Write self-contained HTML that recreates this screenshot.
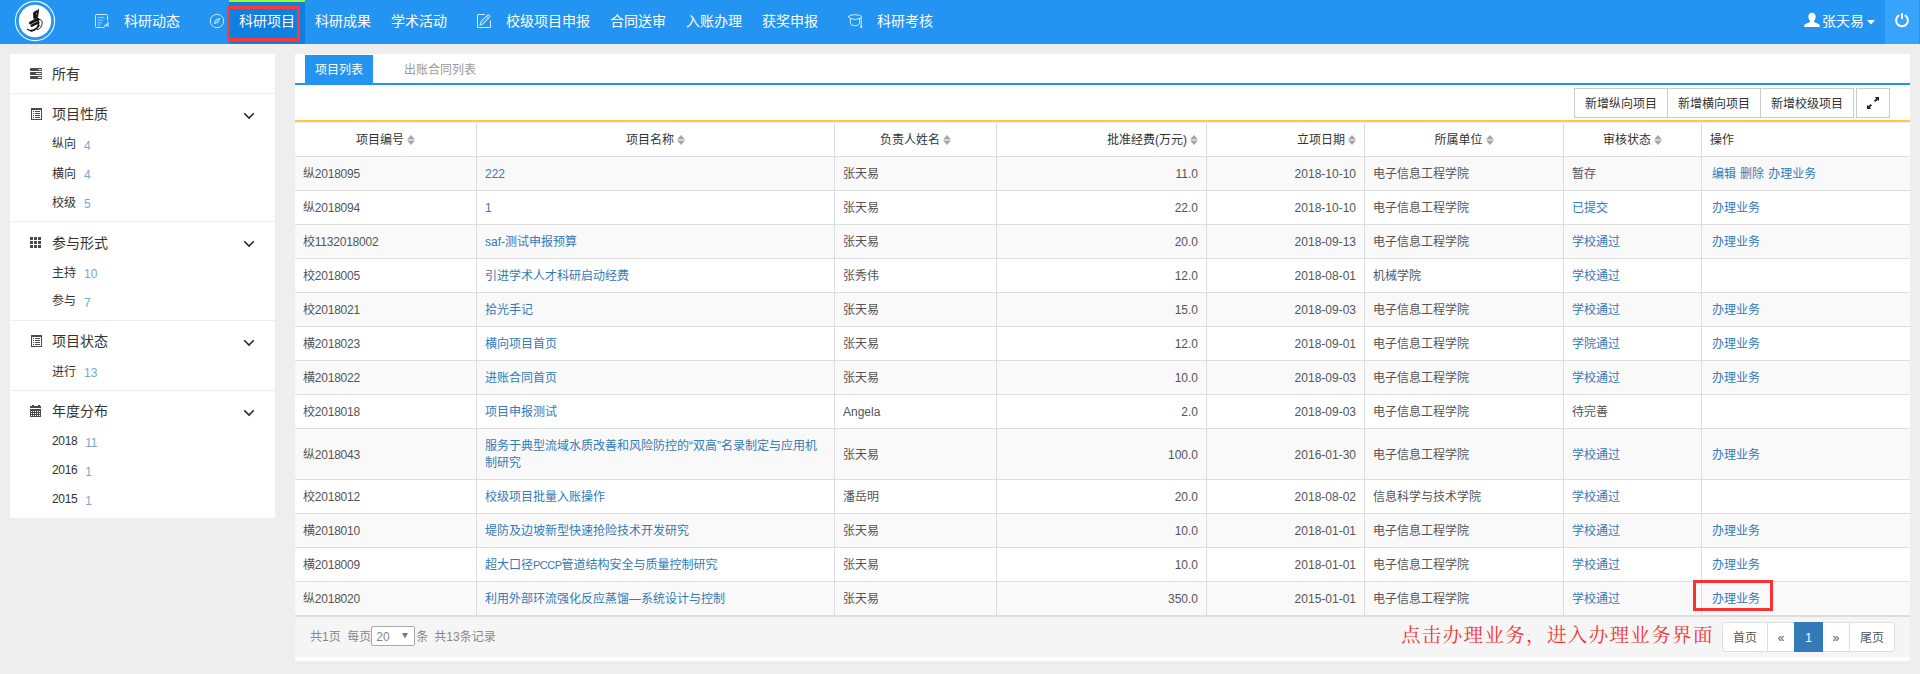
<!DOCTYPE html>
<html lang="zh-CN">
<head>
<meta charset="utf-8">
<title>科研项目</title>
<style>
*{box-sizing:border-box;margin:0;padding:0}
html,body{width:1920px;height:674px;overflow:hidden}
body{background:#eeeeee;font-family:"Liberation Sans","Noto Sans CJK SC",sans-serif;font-size:12px;color:#555;position:relative}
a{color:#337ab7;text-decoration:none}
/* ---------- header ---------- */
#hd{position:absolute;left:0;top:0;width:1920px;height:44px;background:#2494f2}
#hd .nv{position:absolute;top:0;height:44px;line-height:42px;font-size:14px;color:#fff;white-space:nowrap}
#hd .act{position:absolute;left:229px;top:0;width:76px;height:44px;background:#0e80e2;border-top:2px solid #9efb2a}
#hd .ic{position:absolute}
#redbox1{position:absolute;left:227px;top:6px;width:73px;height:35px;border:3px solid #fd3a3a}
#pw{position:absolute;left:1885px;top:0;width:34px;height:44px;background:#38a3fd}
/* ---------- sidebar ---------- */
#sb{position:absolute;left:10px;top:54px;width:265px;height:464px;background:#fff}
#sb .dv{position:absolute;left:0;width:265px;height:1px;background:#eee}
#sb .h{position:absolute;left:42px;font-size:14px;line-height:20px;color:#333;white-space:nowrap}
#sb .s{position:absolute;left:42px;font-size:12px;line-height:18px;color:#333;white-space:nowrap}
#sb .s i{font-style:normal;color:#7ba7d1;margin-left:8px;position:relative;top:1px}
#sb svg{position:absolute}
/* ---------- main ---------- */
#mn{position:absolute;left:295px;top:54px;width:1615px;height:607px;background:#fff}
#tab1{position:absolute;left:10px;top:1px;width:68px;height:29px;background:#2494f2;color:#fff;font-size:12px;line-height:30px;text-align:center}
#tab2{position:absolute;left:109px;top:1px;height:29px;color:#999;font-size:12px;line-height:30px}
#bl{position:absolute;left:0;top:29px;width:1615px;height:2px;background:#2494f2}
#yl{position:absolute;left:0;top:66px;width:1615px;height:2px;background:#fdc942;box-shadow:0 1px 0 #eceef3;z-index:2}
.btn{position:absolute;top:34px;height:30px;border:1px solid #ccc;background:#fff;color:#333;font-size:12px;line-height:30px;text-align:center;white-space:nowrap}
table{position:absolute;left:0;top:68px;width:1615px;border-collapse:separate;border-spacing:0;table-layout:fixed}
th,td{padding:9px 8px 7px;line-height:17px;height:34px;border-left:1px solid #ddd;font-size:12px;font-weight:normal;text-align:left;vertical-align:middle;overflow:hidden}
th{color:#333;text-align:center;white-space:nowrap}
td{color:#555;border-top:1px solid #ddd;white-space:nowrap}
tr>*:first-child{border-left:none}
tbody tr:nth-child(odd) td{background:#f9f9f9}
.r{text-align:right}
th.r{text-align:right}
th.l{text-align:left;padding-left:8px}
td.op{padding-left:10px;word-spacing:.7px}
td:first-child{letter-spacing:-.22px}
.so{display:inline-block;width:8px;height:10px;margin-left:3px;position:relative;top:1px}
#ft{position:absolute;left:0;top:561px;width:1615px;height:42px;background:#f5f5f5;border-top:2px solid #ddd}
#ft .inf{position:absolute;left:15px;top:11px;line-height:18px;color:#888;font-size:12px;white-space:nowrap}
#sel{display:inline-block;vertical-align:middle;width:44px;height:20px;border:1px solid #a9a9a9;border-radius:2px;background:#fff;margin:0 1px 0 0;position:relative;top:-2px;line-height:20px;padding-left:4px;color:#888}
#sel svg{position:absolute;left:30px;top:6px}
#note{position:absolute;left:1106px;top:569px;font-family:"Liberation Serif","Noto Serif CJK SC",serif;font-size:19.5px;letter-spacing:1.35px;line-height:26px;color:#f23535;white-space:nowrap}
#pg{position:absolute;left:1428px;top:568px;height:30px;display:flex}
#pg span{display:block;height:30px;border:1px solid #ddd;margin-left:-1px;background:#fff;color:#555;font-size:12px;line-height:30px;text-align:center}
#pg span.on{background:#337ab7;border-color:#337ab7;color:#fff;position:relative;z-index:1}
#redbox2{position:absolute;left:1693px;top:580px;width:80px;height:31px;border:3px solid #f83232}
</style>
</head>
<body>
<div id="hd">
  <div class="act"></div>
  <!-- logo -->
  <svg class="ic" style="left:14px;top:0" width="42" height="42" viewBox="0 0 42 42">
    <circle cx="21" cy="21" r="19.6" fill="none" stroke="#fff" stroke-width="1.1" opacity=".92"/>
    <circle cx="21" cy="21" r="16.2" fill="#fff"/>
    <g fill="none" stroke="#151515" stroke-linecap="round" stroke-linejoin="round">
      <path d="M24.6 9.8 C22.6 10.8 20.6 11.6 19.5 12.6 C19.2 14.6 19.6 16.8 19.8 18.8 L23.4 18.6 C23.6 16.4 24.6 13 24.6 9.8 Z" fill="#151515" stroke-width=".7"/>
      <path d="M16.4 23 C18.6 21.6 21.4 20.2 23.8 19.3" stroke-width="2.9"/>
      <path d="M17.8 25.7 C19.8 24.6 22 23.6 24.2 22.7" stroke-width="2.5"/>
      <path d="M24.3 19.6 L24.5 26.4" stroke-width="1.6"/>
      <path d="M25.3 19.4 C28.6 19.8 28.8 22.4 27.6 25.6 C26.6 28.2 25.2 29.6 23.1 29.6" stroke-width="1"/>
      <path d="M13.4 29.3 C15.2 30.7 17.4 30.9 19.4 30.3" stroke-width="1.2"/>
      <path d="M17 30.7 C19.6 30.6 23 28.4 24.5 25.6" stroke-width="1.9"/>
    </g>
    <ellipse cx="22.4" cy="13.7" rx=".45" ry=".8" fill="#eee"/>
  </svg>
  <!-- doc icon -->
  <svg class="ic" style="left:94px;top:13px" width="16" height="16" viewBox="0 0 16 16" fill="none" stroke="#fff" opacity=".8">
    <path d="M13.5 7.5 V2.5 Q13.5 1.5 12.5 1.5 H2.5 Q1.5 1.5 1.5 2.5 V13.5 Q1.5 14.5 2.5 14.5 H10.5" stroke-width="1"/>
    <path d="M3.5 4.5 H10.5 M3.5 7 H9 M3.5 9.8 H8 M3.5 12.2 H6.5" stroke-width="1" opacity=".7"/>
    <path d="M10.6 13.6 V12 M12.3 13.6 V10.8 M14 13.6 V9" stroke-width="1.3"/>
  </svg>
  <div class="nv" style="left:124px">科研动态</div>
  <!-- compass icon -->
  <svg class="ic" style="left:209px;top:13px" width="16" height="16" viewBox="0 0 16 16" fill="none" stroke="#fff" opacity=".78">
    <circle cx="8" cy="8" r="6.7" stroke-width="1"/>
    <path d="M10.8 5.2 L9.2 9.2 L5.2 10.8 L6.8 6.8 Z" stroke-width=".9" fill="#fff" fill-opacity=".35"/>
  </svg>
  <div class="nv" style="left:239px">科研项目</div>
  <div class="nv" style="left:315px">科研成果</div>
  <div class="nv" style="left:391px">学术活动</div>
  <!-- edit icon -->
  <svg class="ic" style="left:476px;top:13px" width="16" height="16" viewBox="0 0 16 16" fill="none" stroke="#fff" opacity=".8" stroke-linejoin="round" stroke-linecap="round">
    <path d="M8.6 1.5 H1.5 V14.5 H14.5 V7.6" stroke-width="1"/>
    <path d="M11.2 2.2 Q12.2 1.2 13.3 2.2 Q14.4 3.3 13.4 4.4 L7.2 11 L3.9 12.2 L4.9 8.8 Z" stroke-width="1" fill="#fff" fill-opacity=".25"/>
    <path d="M10.3 3.2 L12.6 5.4" stroke-width=".9"/>
  </svg>
  <div class="nv" style="left:506px">校级项目申报</div>
  <div class="nv" style="left:610px">合同送审</div>
  <div class="nv" style="left:686px">入账办理</div>
  <div class="nv" style="left:762px">获奖申报</div>
  <!-- grad cap icon -->
  <svg class="ic" style="left:847px;top:13px" width="16" height="16" viewBox="0 0 16 16" fill="none" stroke="#fff" opacity=".8" stroke-linejoin="round" stroke-linecap="round">
    <path d="M1.6 3.8 Q1.4 2.8 3.4 2.3 Q7.6 1 12.6 2.3 Q14.6 2.8 14.4 3.9 Q14.3 4.7 12.8 5.2 L8 6.6 L3.2 5.2 Q1.8 4.8 1.6 3.8 Z" stroke-width="1"/>
    <path d="M3.4 5.4 V9.6 Q3.6 12.6 8 12.8 Q12.4 12.6 12.6 9.6 V5.4" stroke-width="1"/>
    <path d="M14.2 4.4 V12.6" stroke-width="1"/>
    <rect x="13.2" y="12.8" width="2" height="2" fill="#fff" stroke="none"/>
  </svg>
  <div class="nv" style="left:877px">科研考核</div>
  <!-- user -->
  <svg class="ic" style="left:1804px;top:12px" width="16" height="16" viewBox="0 0 16 16">
    <path fill="#fff" d="M8 .8 C10.3 .8 11.6 2.4 11.6 4.8 C11.6 6.6 10.9 8 10 8.8 C9.9 9.6 10.2 10 11 10.4 L14.6 12 C15.6 12.5 15.8 13.4 15.8 14.9 H.2 C.2 13.4 .4 12.5 1.4 12 L5 10.4 C5.8 10 6.1 9.6 6 8.8 C5.1 8 4.4 6.6 4.4 4.8 C4.4 2.4 5.7 .8 8 .8 Z"/>
  </svg>
  <div class="nv" style="left:1822px">张天易</div>
  <svg class="ic" style="left:1867px;top:20px" width="8" height="5" viewBox="0 0 8 5"><path d="M0 0 H8 L4 4.4 Z" fill="#fff"/></svg>
  <div id="pw">
    <svg style="position:absolute;left:9px;top:12px" width="16" height="16" viewBox="0 0 16 16" fill="none" stroke="#fff" stroke-width="2" stroke-linecap="butt">
      <path d="M5.3 3.2 A5.9 5.9 0 1 0 10.7 3.2"/>
      <path d="M8 1.2 V7"/>
    </svg>
  </div>
  <div id="redbox1"></div>
</div>
<div id="sb">
<svg style="left:20px;top:14px" width="12" height="11" viewBox="0 0 12 11"><g fill="#4a4a4a"><rect x="0" y="0" width="12" height="3" rx=".7"/><rect x="0" y="4" width="12" height="3" rx=".7"/><rect x="0" y="8" width="12" height="3" rx=".7"/></g><g fill="#fff"><rect x="8.6" y="1" width="2.6" height="1"/><rect x="6" y="5" width="5.2" height="1"/><rect x="8" y="9" width="3.2" height="1"/></g></svg>
<div class="h" style="top:10px">所有</div>
<div class="dv" style="top:39px"></div>
<svg style="left:21px;top:54px" width="11" height="12" viewBox="0 0 11 12" shape-rendering="crispEdges"><rect x=".5" y=".5" width="10" height="11" fill="none" stroke="#4a4a4a" stroke-width="1"/><rect x="0" y="0" width="11" height="2" fill="#4a4a4a"/><g fill="#4a4a4a"><rect x="2" y="3" width="1" height="1"/><rect x="4" y="3" width="5" height="1"/><rect x="2" y="5" width="1" height="1"/><rect x="4" y="5" width="5" height="1"/><rect x="2" y="7" width="1" height="1"/><rect x="4" y="7" width="5" height="1"/><rect x="2" y="9" width="1" height="1"/><rect x="4" y="9" width="5" height="1"/></g></svg>
<div class="h" style="top:50px">项目性质</div>
<svg style="left:233px;top:58px" width="12" height="8" viewBox="0 0 12 8"><path d="M1.2 1.2 L6 6 L10.8 1.2" fill="none" stroke="#2a2a2a" stroke-width="1.6"/></svg>
<div class="s" style="top:81px">纵向<i style="top:2px">4</i></div>
<div class="s" style="top:111px">横向<i>4</i></div>
<div class="s" style="top:140px">校级<i>5</i></div>
<div class="dv" style="top:167px"></div>
<svg style="left:20px;top:183px" width="11" height="11" viewBox="0 0 11 11" shape-rendering="crispEdges"><g fill="#4a4a4a"><rect x="0" y="0" width="3" height="3"/><rect x="4" y="0" width="3" height="3"/><rect x="8" y="0" width="3" height="3"/><rect x="0" y="4" width="3" height="3"/><rect x="4" y="4" width="3" height="3"/><rect x="8" y="4" width="3" height="3"/><rect x="0" y="8" width="3" height="3"/><rect x="4" y="8" width="3" height="3"/><rect x="8" y="8" width="3" height="3"/></g></svg>
<div class="h" style="top:179px">参与形式</div>
<svg style="left:233px;top:186px" width="12" height="8" viewBox="0 0 12 8"><path d="M1.2 1.2 L6 6 L10.8 1.2" fill="none" stroke="#2a2a2a" stroke-width="1.6"/></svg>
<div class="s" style="top:210px">主持<i>10</i></div>
<div class="s" style="top:238px">参与<i style="top:2px">7</i></div>
<div class="dv" style="top:266px"></div>
<svg style="left:21px;top:281px" width="11" height="12" viewBox="0 0 11 12" shape-rendering="crispEdges"><rect x=".5" y=".5" width="10" height="11" fill="none" stroke="#4a4a4a" stroke-width="1"/><rect x="0" y="0" width="11" height="2" fill="#4a4a4a"/><g fill="#4a4a4a"><rect x="2" y="3" width="1" height="1"/><rect x="4" y="3" width="5" height="1"/><rect x="2" y="5" width="1" height="1"/><rect x="4" y="5" width="5" height="1"/><rect x="2" y="7" width="1" height="1"/><rect x="4" y="7" width="5" height="1"/><rect x="2" y="9" width="1" height="1"/><rect x="4" y="9" width="5" height="1"/></g></svg>
<div class="h" style="top:277px">项目状态</div>
<svg style="left:233px;top:285px" width="12" height="8" viewBox="0 0 12 8"><path d="M1.2 1.2 L6 6 L10.8 1.2" fill="none" stroke="#2a2a2a" stroke-width="1.6"/></svg>
<div class="s" style="top:309px">进行<i>13</i></div>
<div class="dv" style="top:336px"></div>
<svg style="left:20px;top:351px" width="11" height="12" viewBox="0 0 11 12" shape-rendering="crispEdges"><g fill="#4a4a4a"><rect x="1.5" y="0" width="2" height="1"/><rect x="7.5" y="0" width="2" height="1"/><rect x="0" y="1" width="11" height="2"/><rect x="0" y="4" width="11" height="8"/></g><g fill="#fff"><rect x="1" y="6" width="1" height="1"/><rect x="3" y="6" width="1" height="1"/><rect x="5" y="6" width="1" height="1"/><rect x="7" y="6" width="1" height="1"/><rect x="9" y="6" width="1" height="1"/><rect x="1" y="8" width="1" height="1"/><rect x="3" y="8" width="1" height="1"/><rect x="5" y="8" width="1" height="1"/><rect x="7" y="8" width="1" height="1"/><rect x="9" y="8" width="1" height="1"/><rect x="1" y="10" width="1" height="1"/><rect x="3" y="10" width="1" height="1"/><rect x="5" y="10" width="1" height="1"/><rect x="7" y="10" width="1" height="1"/><rect x="9" y="10" width="1" height="1"/></g></svg>
<div class="h" style="top:347px">年度分布</div>
<svg style="left:233px;top:355px" width="12" height="8" viewBox="0 0 12 8"><path d="M1.2 1.2 L6 6 L10.8 1.2" fill="none" stroke="#2a2a2a" stroke-width="1.6"/></svg>
<div class="s" style="top:378px;letter-spacing:-.35px">2018<i style="top:2px">11</i></div>
<div class="s" style="top:407px;letter-spacing:-.35px">2016<i style="top:2px">1</i></div>
<div class="s" style="top:436px;letter-spacing:-.35px">2015<i style="top:2px">1</i></div>
</div>
<div id="mn">
<div id="tab1">项目列表</div>
<div id="tab2">出账合同列表</div>
<div id="bl"></div>
<div class="btn" style="left:1279px;width:94px">新增纵向项目</div>
<div class="btn" style="left:1372px;width:94px">新增横向项目</div>
<div class="btn" style="left:1465px;width:94px">新增校级项目</div>
<div class="btn" style="left:1561px;width:34px"><svg style="position:absolute;left:10px;top:8px" width="12" height="12" viewBox="0 0 12 12"><path d="M7.8 0 H12 V4.2 L10.6 2.8 L8.4 5 L7 3.6 L9.2 1.4 Z M4.2 12 H0 V7.8 L1.4 9.2 L3.6 7 L5 8.4 L2.8 10.6 Z" fill="#222"/></svg></div>
<div id="yl"></div>
<table><colgroup><col style="width:181px"><col style="width:358px"><col style="width:162px"><col style="width:210px"><col style="width:158px"><col style="width:199px"><col style="width:138px"><col style="width:209px"></colgroup>
<thead><tr><th>项目编号<svg class="so" viewBox="0 0 8 10"><path d="M0 4.5 L4 0 L8 4.5 Z M0 5.5 L4 10 L8 5.5 Z" fill="#a6a6a6"/></svg></th><th>项目名称<svg class="so" viewBox="0 0 8 10"><path d="M0 4.5 L4 0 L8 4.5 Z M0 5.5 L4 10 L8 5.5 Z" fill="#a6a6a6"/></svg></th><th>负责人姓名<svg class="so" viewBox="0 0 8 10"><path d="M0 4.5 L4 0 L8 4.5 Z M0 5.5 L4 10 L8 5.5 Z" fill="#a6a6a6"/></svg></th><th class="r">批准经费(万元)<svg class="so" viewBox="0 0 8 10"><path d="M0 4.5 L4 0 L8 4.5 Z M0 5.5 L4 10 L8 5.5 Z" fill="#a6a6a6"/></svg></th><th class="r">立项日期<svg class="so" viewBox="0 0 8 10"><path d="M0 4.5 L4 0 L8 4.5 Z M0 5.5 L4 10 L8 5.5 Z" fill="#a6a6a6"/></svg></th><th>所属单位<svg class="so" viewBox="0 0 8 10"><path d="M0 4.5 L4 0 L8 4.5 Z M0 5.5 L4 10 L8 5.5 Z" fill="#a6a6a6"/></svg></th><th>审核状态<svg class="so" viewBox="0 0 8 10"><path d="M0 4.5 L4 0 L8 4.5 Z M0 5.5 L4 10 L8 5.5 Z" fill="#a6a6a6"/></svg></th><th class="l">操作</th></tr></thead><tbody>
<tr><td>纵2018095</td><td><a>222</a></td><td>张天易</td><td class="r">11.0</td><td class="r">2018-10-10</td><td>电子信息工程学院</td><td>暂存</td><td class="op"><a>编辑</a> <a>删除</a> <a>办理业务</a></td></tr>
<tr><td>纵2018094</td><td><a>1</a></td><td>张天易</td><td class="r">22.0</td><td class="r">2018-10-10</td><td>电子信息工程学院</td><td><a>已提交</a></td><td class="op"><a>办理业务</a></td></tr>
<tr><td>校1132018002</td><td><a>saf-测试申报预算</a></td><td>张天易</td><td class="r">20.0</td><td class="r">2018-09-13</td><td>电子信息工程学院</td><td><a>学校通过</a></td><td class="op"><a>办理业务</a></td></tr>
<tr><td>校2018005</td><td><a>引进学术人才科研启动经费</a></td><td>张秀伟</td><td class="r">12.0</td><td class="r">2018-08-01</td><td>机械学院</td><td><a>学校通过</a></td><td class="op"></td></tr>
<tr><td>校2018021</td><td><a>拾光手记</a></td><td>张天易</td><td class="r">15.0</td><td class="r">2018-09-03</td><td>电子信息工程学院</td><td><a>学校通过</a></td><td class="op"><a>办理业务</a></td></tr>
<tr><td>横2018023</td><td><a>横向项目首页</a></td><td>张天易</td><td class="r">12.0</td><td class="r">2018-09-01</td><td>电子信息工程学院</td><td><a>学院通过</a></td><td class="op"><a>办理业务</a></td></tr>
<tr><td>横2018022</td><td><a>进账合同首页</a></td><td>张天易</td><td class="r">10.0</td><td class="r">2018-09-03</td><td>电子信息工程学院</td><td><a>学校通过</a></td><td class="op"><a>办理业务</a></td></tr>
<tr><td>校2018018</td><td><a>项目申报测试</a></td><td>Angela</td><td class="r">2.0</td><td class="r">2018-09-03</td><td>电子信息工程学院</td><td>待完善</td><td class="op"></td></tr>
<tr><td>纵2018043</td><td><a>服务于典型流域水质改善和风险防控的“双高”名录制定与应用机<br>制研究</a></td><td>张天易</td><td class="r">100.0</td><td class="r">2016-01-30</td><td>电子信息工程学院</td><td><a>学校通过</a></td><td class="op"><a>办理业务</a></td></tr>
<tr><td>校2018012</td><td><a>校级项目批量入账操作</a></td><td>潘岳明</td><td class="r">20.0</td><td class="r">2018-08-02</td><td>信息科学与技术学院</td><td><a>学校通过</a></td><td class="op"></td></tr>
<tr><td>横2018010</td><td><a>堤防及边坡新型快速抢险技术开发研究</a></td><td>张天易</td><td class="r">10.0</td><td class="r">2018-01-01</td><td>电子信息工程学院</td><td><a>学校通过</a></td><td class="op"><a>办理业务</a></td></tr>
<tr><td>横2018009</td><td><a>超大口径<span style="font-size:11px;letter-spacing:-.5px">PCCP</span>管道结构安全与质量控制研究</a></td><td>张天易</td><td class="r">10.0</td><td class="r">2018-01-01</td><td>电子信息工程学院</td><td><a>学校通过</a></td><td class="op"><a>办理业务</a></td></tr>
<tr><td>纵2018020</td><td><a>利用外部环流强化反应蒸馏—系统设计与控制</a></td><td>张天易</td><td class="r">350.0</td><td class="r">2015-01-01</td><td>电子信息工程学院</td><td><a>学校通过</a></td><td class="op"><a>办理业务</a></td></tr>
</tbody></table>
<div id="ft"><div class="inf">共1页&nbsp; 每页<span id="sel">20<svg width="6" height="6" viewBox="0 0 6 6"><path d="M0 0 H6 L3 5.6 Z" fill="#7a7a7a"/></svg></span>条<span style="display:inline-block;width:6px"></span>共13条记录</div></div>
<div id="note">点击办理业务，进入办理业务界面</div>
<div id="pg"><span style="width:46px;border-radius:4px 0 0 4px">首页</span><span style="width:28px">«</span><span class="on" style="width:29px">1</span><span style="width:28px">»</span><span style="width:46px;border-radius:0 4px 4px 0">尾页</span></div>
</div>
<div id="redbox2"></div>
</body>
</html>
